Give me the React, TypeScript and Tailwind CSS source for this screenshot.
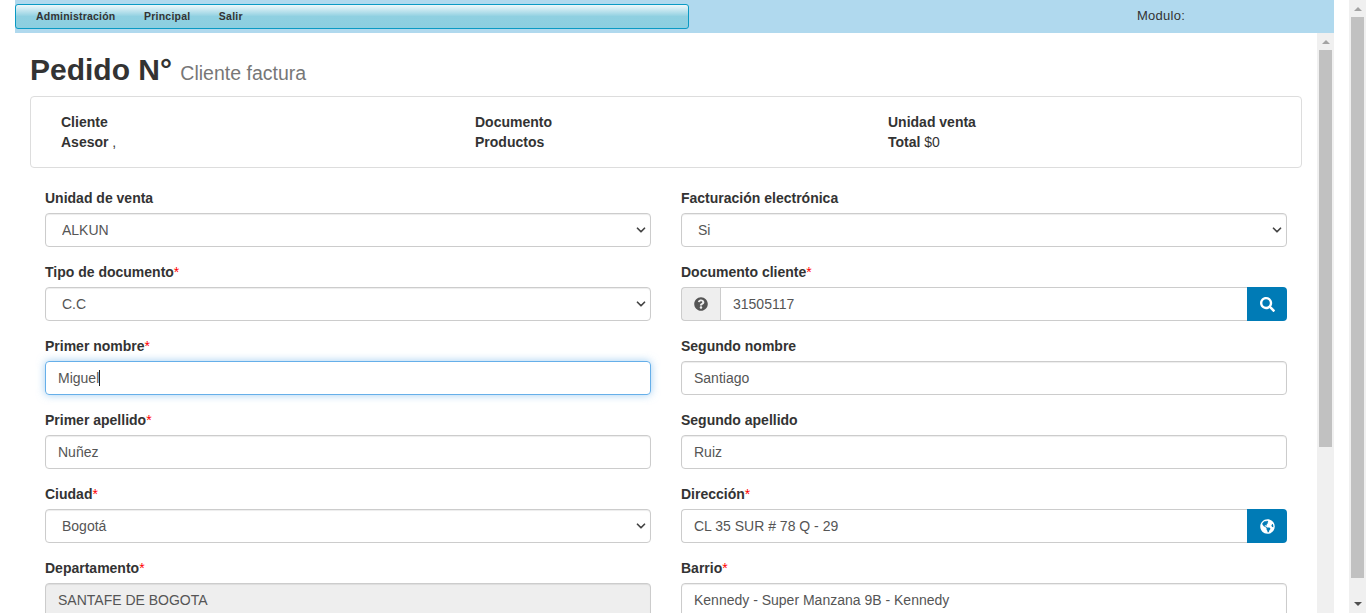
import { ChevronDown } from "lucide-react";
import { FaQuestionCircle, FaSearch, FaGlobeAmericas } from "react-icons/fa";
import type { ReactNode } from "react";

const inputClass =
  "w-full h-[34px] px-3 border border-[#ccc] rounded text-sm text-[#555] outline-none shadow-[inset_0_1px_1px_rgba(0,0,0,0.075)]";

function Field({ label, required, children }: { label: string; required?: boolean; children: ReactNode }) {
  return (
    <div className="h-[74px] pt-[20px]">
      <label className="block h-[25px] leading-[20px] text-sm font-bold text-[#333]">
        {label}
        {required && <span className="text-[#f00] font-normal">*</span>}
      </label>
      {children}
    </div>
  );
}

function SelectBox({ value }: { value: string }) {
  return (
    <div className="relative">
      <select defaultValue={value} className={`${inputClass} bg-white appearance-none pl-4`}>
        <option>{value}</option>
      </select>
      <ChevronDown size={14} strokeWidth={3} className="absolute right-[3px] top-[10px] text-[#444]" />
    </div>
  );
}

function Addon({ children }: { children: ReactNode }) {
  return (
    <button className="flex w-10 h-[34px] shrink-0 items-center justify-center rounded-r bg-[#007bb6] text-white text-[15px]">
      {children}
    </button>
  );
}

function InfoCol({ first, second, extra }: { first: string; second: string; extra?: string }) {
  return (
    <div className="text-sm leading-[20px] text-[#333]">
      <div className="font-bold">{first}</div>
      <div>
        <span className="font-bold">{second}</span> {extra}
      </div>
    </div>
  );
}

function ScrollTrack({ thumbHeight, down }: { thumbHeight: string; down?: boolean }) {
  return (
    <div className="relative w-[17px] h-full shrink-0 bg-[#f0f0f0]">
      <svg className="absolute left-[5px] top-[7px]" width="8" height="4" viewBox="0 0 8 4">
        <path d="M4 0 L8 4 L0 4 Z" fill="#a3a3a3" />
      </svg>
      <div className={`absolute left-[2px] top-[17px] w-[13px] bg-[#c1c1c1] ${thumbHeight}`} />
      {down && (
        <svg className="absolute left-[5px] bottom-[7px]" width="8" height="4" viewBox="0 0 8 4">
          <path d="M0 0 L8 0 L4 4 Z" fill="#505050" />
        </svg>
      )}
    </div>
  );
}

export default function App() {
  return (
    <div className="flex h-[613px] w-[1366px] overflow-hidden bg-white font-['Liberation_Sans',Arial,sans-serif]">
      <div className="w-[15px] shrink-0" />

      <div className="w-[1319px] shrink-0 flex flex-col">
        {/* Top bar */}
        <div className="h-[33px] shrink-0 bg-[#b0d9ee] flex items-start pt-[4px]">
          <nav className="flex items-center w-[674px] h-[25px] pl-[20px] gap-[28.5px] rounded-[3px] border border-[#0a9ac4] bg-gradient-to-b from-[#eef8fb] via-[#8fd0e1] to-[#8ccfe0] text-[10.5px] font-bold text-[#333] tracking-[0.22px]">
            <span>Administración</span>
            <span>Principal</span>
            <span>Salir</span>
          </nav>
          <span className="ml-[448px] mt-[2px] text-[13px] leading-[20px] tracking-[0.25px] text-[#333]">Modulo:</span>
        </div>

        <div className="flex flex-1 min-h-0">
          <div className="w-[1302px] shrink-0 pl-[15px]">
            <h1 className="mt-[17px] h-[46px] leading-[39px] text-[30px] font-bold text-[#333]">
              Pedido N° <small className="text-[19.5px] font-normal text-[#777]">Cliente factura</small>
            </h1>

            <div className="grid grid-cols-[414px_413px_1fr] w-[1272px] h-[72px] pl-[30px] pt-[15px] border border-[#ddd] rounded bg-white">
              <InfoCol first="Cliente" second="Asesor" extra="," />
              <InfoCol first="Documento" second="Productos" />
              <InfoCol first="Unidad venta" second="Total" extra="$0" />
            </div>

            <div className="grid grid-cols-[606px_606px] gap-x-[30px] pl-[15px]">
              <Field label="Unidad de venta"><SelectBox value="ALKUN" /></Field>
              <Field label="Facturación electrónica"><SelectBox value="Si" /></Field>

              <Field label="Tipo de documento" required><SelectBox value="C.C" /></Field>
              <Field label="Documento cliente" required>
                <div className="flex">
                  <span className="flex w-[39px] h-[34px] shrink-0 items-center justify-center rounded-l border border-r-0 border-[#ccc] bg-[#eee] text-[#555] text-sm">
                    <FaQuestionCircle />
                  </span>
                  <input defaultValue="31505117" className="w-full h-[34px] px-3 border border-r-0 border-[#ccc] text-sm text-[#555] outline-none" />
                  <Addon><FaSearch /></Addon>
                </div>
              </Field>

              <Field label="Primer nombre" required>
                <div className="relative">
                  <input defaultValue="Miguel" className="w-full h-[34px] px-3 border border-[#66afe9] rounded text-sm text-[#555] outline-none shadow-[0_0_8px_rgba(102,175,233,0.6)]" />
                  <span className="absolute left-[54px] top-[9px] h-[16px] w-px bg-[#222]" />
                </div>
              </Field>
              <Field label="Segundo nombre"><input defaultValue="Santiago" className={inputClass} /></Field>

              <Field label="Primer apellido" required><input defaultValue="Nuñez" className={inputClass} /></Field>
              <Field label="Segundo apellido"><input defaultValue="Ruiz" className={inputClass} /></Field>

              <Field label="Ciudad" required><SelectBox value="Bogotá" /></Field>
              <Field label="Dirección" required>
                <div className="flex">
                  <input defaultValue="CL 35 SUR # 78 Q - 29" className="w-full h-[34px] px-3 border border-r-0 border-[#ccc] rounded-l text-sm text-[#555] outline-none" />
                  <Addon><FaGlobeAmericas /></Addon>
                </div>
              </Field>

              <Field label="Departamento" required>
                <input disabled defaultValue="SANTAFE DE BOGOTA" className={`${inputClass} bg-[#eee]`} />
              </Field>
              <Field label="Barrio" required>
                <input defaultValue="Kennedy - Super Manzana 9B - Kennedy" className={inputClass} />
              </Field>
            </div>
          </div>
          <ScrollTrack thumbHeight="h-[397px]" />
        </div>
      </div>

      <div className="w-[15px] shrink-0" />
      <ScrollTrack thumbHeight="h-[561px]" down />
    </div>
  );
}
